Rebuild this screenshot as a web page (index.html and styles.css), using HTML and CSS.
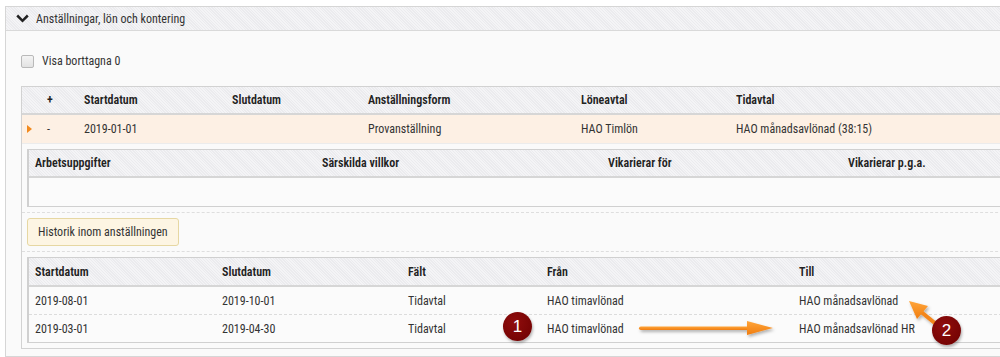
FILE: index.html
```html
<!DOCTYPE html>
<html lang="sv">
<head>
  <meta charset="UTF-8" />
  <meta name="viewport" content="width=device-width, initial-scale=1.0" />
  <title>Anställningar</title>
  <link rel="stylesheet" href="styles.css">
</head>
<body>
  <div class="page">
    <div class="panel">
      <div class="panel-head">
        <svg class="chevron" width="13" height="9" viewBox="0 0 13 9">
          <polyline points="1.2,1.5 6.5,6.8 11.8,1.5" fill="none" stroke="#222" stroke-width="2.5" />
        </svg>
        <span>Anställningar, lön och kontering</span>
      </div>

      <div class="panel-body">
        <label class="check-row">
          <span class="checkbox"></span>
          <span>Visa borttagna 0</span>
        </label>

        <div class="emp">
          <div class="grid main-cols head">
            <div></div>
            <div>+</div>
            <div>Startdatum</div>
            <div>Slutdatum</div>
            <div>Anställningsform</div>
            <div>Löneavtal</div>
            <div>Tidavtal</div>
          </div>
          <div class="grid main-cols row selected">
            <div><span class="marker"></span></div>
            <div>-</div>
            <div>2019-01-01</div>
            <div></div>
            <div>Provanställning</div>
            <div>HAO Timlön</div>
            <div>HAO månadsavlönad (38:15)</div>
          </div>

          <div class="detail">
            <div class="subtable">
              <div class="grid sub-cols head">
                <div>Arbetsuppgifter</div>
                <div>Särskilda villkor</div>
                <div>Vikarierar för</div>
                <div>Vikarierar p.g.a.</div>
              </div>
              <div class="empty"></div>
            </div>
          </div>

          <div class="actions">
            <button class="btn-history" type="button">Historik inom anställningen</button>
          </div>

          <div class="history">
            <div class="subtable">
              <div class="grid hist-cols head">
                <div>Startdatum</div>
                <div>Slutdatum</div>
                <div>Fält</div>
                <div>Från</div>
                <div>Till</div>
              </div>
              <div class="grid hist-cols hrow">
                <div>2019-08-01</div>
                <div>2019-10-01</div>
                <div>Tidavtal</div>
                <div>HAO timavlönad</div>
                <div>HAO månadsavlönad</div>
              </div>
              <div class="grid hist-cols hrow">
                <div>2019-03-01</div>
                <div>2019-04-30</div>
                <div>Tidavtal</div>
                <div>HAO timavlönad</div>
                <div>HAO månadsavlönad HR</div>
              </div>
            </div>
          </div>
        </div>
      </div>
    </div>

    <!-- annotations -->
    <svg class="arrows" width="1000" height="357" viewBox="0 0 1000 357">
      <defs>
        <filter id="shadow" x="-20%" y="-50%" width="140%" height="200%">
          <feDropShadow dx="1.5" dy="2" stdDeviation="1.5" flood-color="#000" flood-opacity="0.3" />
        </filter>
        <linearGradient id="orange" x1="0" y1="0" x2="0" y2="1">
          <stop offset="0" stop-color="#ffa53a" />
          <stop offset="1" stop-color="#f07d10" />
        </linearGradient>
      </defs>
      <g filter="url(#shadow)" fill="url(#orange)">
        <rect x="639" y="326.5" width="112" height="3.5" rx="1.75" />
        <polygon points="747,321 773,328 747,335" />
        <line x1="936" y1="324" x2="920" y2="311" stroke="#f3861a" stroke-width="4" stroke-linecap="round" />
        <polygon points="909,301 928,306 917,319" />
      </g>
    </svg>
    <div class="badge badge-1">1</div>
    <div class="badge badge-2">2</div>
  </div>
</body>
</html>
```
FILE: styles.css
```css
body {
  margin: 0;
  background-color: #fff;
  font-family: Roboto, "Liberation Sans", sans-serif;
  font-stretch: 75%;
  font-size: 12px;
  color: #333;
  overflow: hidden;
}

.page {
  position: relative;
  height: 357px;
  padding-top: 6px;
  box-sizing: border-box;
}

.panel {
  margin-left: 5px;
  margin-right: -40px;
  border: 1px solid #d6d6d6;
  background-color: #fafafa;
}

.panel-head,
.head {
  background-color: #f1f1f4;
  background-image: repeating-linear-gradient(45deg, #f4f4f6 0, #f4f4f6 1px, #ebebee 1px, #ebebee 2px);
}

.panel-head {
  display: flex;
  align-items: center;
  gap: 7px;
  height: 23px;
  padding-left: 10px;
  border-bottom: 1px solid #d9d9d9;
  color: #333;
}

.chevron {
  display: block;
}

.panel-body {
  padding: 18px 0 7px 15px;
}

.check-row {
  display: flex;
  align-items: center;
  gap: 8px;
  height: 24px;
  color: #333;
}

.checkbox {
  width: 11px;
  height: 11px;
  border: 1px solid #b9b9b9;
  border-radius: 2px;
  background: linear-gradient(#f4f4f4, #e2e2e2);
}

.emp {
  margin-top: 13px;
  border: 1px solid #d2d2d2;
}

.grid {
  display: grid;
  align-items: center;
}

.grid > div {
  padding-left: 6px;
  white-space: nowrap;
}

.head {
  height: 26px;
  border-bottom: 2px solid #d6d6d6;
  font-weight: 600;
  color: #222;
}

.main-cols {
  grid-template-columns: 19px 37px 148px 136px 213px 155px 1fr;
}

.main-cols > div:first-child {
  padding-left: 5px;
}

.row {
  height: 28px;
  border-bottom: 1px solid #ececec;
}

.selected {
  background-color: #fdf0e4;
}

.marker {
  display: block;
  width: 0;
  height: 0;
  border-top: 4.5px solid transparent;
  border-bottom: 4.5px solid transparent;
  border-left: 5px solid #f28a1e;
}

.detail {
  padding: 5px 0 5px 5px;
  border-bottom: 1px dashed #dedede;
}

.subtable {
  border: 1px solid #d0d0d0;
  border-left-width: 2px;
  background-color: #fbfbfb;
}

.sub-cols {
  grid-template-columns: 287px 286px 240px 1fr;
}

.empty {
  height: 28px;
}

.actions {
  padding: 5px 0 5px 5px;
  border-bottom: 1px dashed #dedede;
}

.btn-history {
  height: 28px;
  padding: 0 10px;
  border: 1px solid #e6d7a2;
  border-radius: 3px;
  background-color: #fdf5e3;
  font: inherit;
  font-stretch: 75%;
  color: #333;
}

.history {
  padding: 5px 0 5px 5px;
}

.history .head {
  height: 27px;
}

.hist-cols {
  grid-template-columns: 187px 186px 139px 252px 1fr;
}

.hrow {
  height: 27px;
}

.hrow + .hrow {
  border-top: 1px dashed #dcdcdc;
}

.arrows {
  position: absolute;
  top: 0;
  left: 0;
  pointer-events: none;
}

.badge {
  position: absolute;
  width: 29px;
  height: 29px;
  border-radius: 50%;
  background: radial-gradient(circle at 40% 35%, #900d0d, #6c0000);
  box-shadow: 1px 2px 3px rgba(0, 0, 0, 0.3);
  color: #fff;
  font-family: "Liberation Sans", Arial, sans-serif;
  font-stretch: normal;
  font-size: 17px;
  line-height: 29px;
  text-align: center;
}

.badge-1 {
  left: 503px;
  top: 312px;
}

.badge-2 {
  left: 932px;
  top: 316px;
}
```
